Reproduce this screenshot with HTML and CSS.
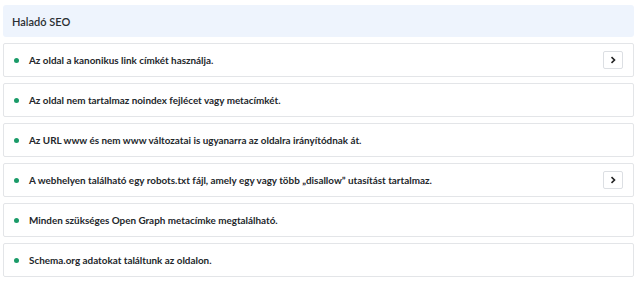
FILE: index.html
```html
<!DOCTYPE html>
<html lang="hu">
<head>
  <meta charset="UTF-8" />
  <meta name="viewport" content="width=device-width, initial-scale=1.0" />
  <title>Haladó SEO</title>
  <link rel="stylesheet" href="styles.css">
</head>
<body>
  <div class="panel">
    <div class="panel-head">Haladó SEO</div>

    <div class="check">
      <span class="dot"></span>
      <span class="text">Az oldal a kanonikus link címkét használja.</span>
      <button class="more" aria-label="Részletek">
        <svg width="8" height="8" viewBox="0 0 8 8"><path d="M2.5 1.2 5.5 4 2.5 6.8" fill="none" stroke="#222" stroke-width="1.6"/></svg>
      </button>
    </div>

    <div class="check">
      <span class="dot"></span>
      <span class="text">Az oldal nem tartalmaz noindex fejlécet vagy metacímkét.</span>
    </div>

    <div class="check">
      <span class="dot"></span>
      <span class="text">Az URL www és nem www változatai is ugyanarra az oldalra irányítódnak át.</span>
    </div>

    <div class="check">
      <span class="dot"></span>
      <span class="text">A webhelyen található egy robots.txt fájl, amely egy vagy több „disallow” utasítást tartalmaz.</span>
      <button class="more" aria-label="Részletek">
        <svg width="8" height="8" viewBox="0 0 8 8"><path d="M2.5 1.2 5.5 4 2.5 6.8" fill="none" stroke="#222" stroke-width="1.6"/></svg>
      </button>
    </div>

    <div class="check">
      <span class="dot"></span>
      <span class="text">Minden szükséges Open Graph metacímke megtalálható.</span>
    </div>

    <div class="check">
      <span class="dot"></span>
      <span class="text">Schema.org adatokat találtunk az oldalon.</span>
    </div>
  </div>
</body>
</html>
```

FILE: styles.css
```css
* { box-sizing: border-box; }

body {
  margin: 0;
  background: #fff;
  font-family: "Lato", "Noto Sans", sans-serif;
  color: #212529;
}

.panel {
  padding: 5px 6px 0 3px;
  display: flex;
  flex-direction: column;
  gap: 6px;
}

.panel-head {
  height: 32px;
  display: flex;
  align-items: center;
  padding: 0 9px;
  background: #eef4fd;
  border-radius: 3px;
  font-size: 11px;
  font-weight: 600;
  color: #2b2f33;
}

.check {
  height: 34px;
  display: flex;
  align-items: center;
  padding: 0 10px 0 10px;
  border: 1px solid #e3e5e8;
  border-radius: 2px;
  background: #fff;
}

.dot {
  width: 5px;
  height: 5px;
  border-radius: 50%;
  background: #1a9b68;
  flex: 0 0 5px;
  margin-right: 10px;
}

.text {
  flex: 1;
  font-size: 9.9px;
  font-weight: 700;
  color: #23272b;
  white-space: nowrap;
}

.more {
  width: 20px;
  height: 18px;
  padding: 0;
  display: flex;
  align-items: center;
  justify-content: center;
  background: #fff;
  border: 1px solid #dcdfe3;
  border-radius: 2px;
  cursor: pointer;
}
```
